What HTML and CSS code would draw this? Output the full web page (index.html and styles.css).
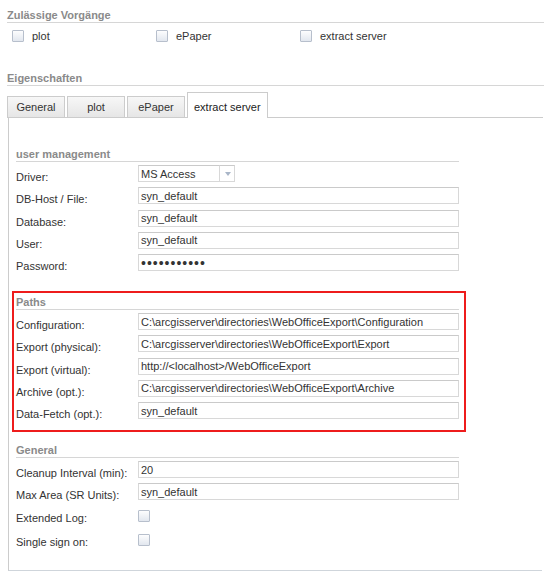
FILE: index.html
```html
<!DOCTYPE html>
<html lang="de">
<head>
    <meta charset="UTF-8">
    <meta name="viewport" content="width=device-width, initial-scale=1.0">
    <title>Extract Server - Eigenschaften</title>
    <link rel="stylesheet" href="styles.css">
</head>
<body>
    <div class="page">
        <div class="group-title ops-title">Zulässige Vorgänge</div>
        <div class="ops">
            <label class="op"><input type="checkbox" class="check"> plot</label>
            <label class="op"><input type="checkbox" class="check"> ePaper</label>
            <label class="op"><input type="checkbox" class="check"> extract server</label>
        </div>

        <div class="group-title props-title">Eigenschaften</div>
        <div class="tabs">
            <div class="tab">General</div>
            <div class="tab">plot</div>
            <div class="tab">ePaper</div>
            <div class="tab active">extract server</div>
        </div>

        <div class="panel">
            <section class="fs">
                <div class="group-title">user management</div>
                <div class="row">
                    <label>Driver:</label>
                    <div class="combo">
                        <input type="text" class="field combo-input" value="MS Access" readonly>
                        <span class="trigger"></span>
                    </div>
                </div>
                <div class="row">
                    <label>DB-Host / File:</label>
                    <input type="text" class="field" value="syn_default">
                </div>
                <div class="row">
                    <label>Database:</label>
                    <input type="text" class="field" value="syn_default">
                </div>
                <div class="row">
                    <label>User:</label>
                    <input type="text" class="field" value="syn_default">
                </div>
                <div class="row">
                    <label>Password:</label>
                    <input type="password" class="field password" value="syn_default">
                </div>
            </section>

            <section class="fs highlight">
                <div class="group-title">Paths</div>
                <div class="row">
                    <label>Configuration:</label>
                    <input type="text" class="field" value="C:\arcgisserver\directories\WebOfficeExport\Configuration">
                </div>
                <div class="row">
                    <label>Export (physical):</label>
                    <input type="text" class="field" value="C:\arcgisserver\directories\WebOfficeExport\Export">
                </div>
                <div class="row">
                    <label>Export (virtual):</label>
                    <input type="text" class="field" value="http://<localhost>/WebOfficeExport">
                </div>
                <div class="row">
                    <label>Archive (opt.):</label>
                    <input type="text" class="field" value="C:\arcgisserver\directories\WebOfficeExport\Archive">
                </div>
                <div class="row">
                    <label>Data-Fetch (opt.):</label>
                    <input type="text" class="field" value="syn_default">
                </div>
            </section>

            <section class="fs">
                <div class="group-title">General</div>
                <div class="row">
                    <label>Cleanup Interval (min):</label>
                    <input type="text" class="field" value="20">
                </div>
                <div class="row">
                    <label>Max Area (SR Units):</label>
                    <input type="text" class="field" value="syn_default">
                </div>
                <div class="row check-row">
                    <label>Extended Log:</label>
                    <input type="checkbox" class="check">
                </div>
                <div class="row check-row">
                    <label>Single sign on:</label>
                    <input type="checkbox" class="check">
                </div>
            </section>
        </div>
    </div>
</body>
</html>
```

FILE: styles.css
```css
:root {
    --text-color: #333;
    --title-color: #8a8a8a;
    --line-color: #d6d6d6;
    --border-color: #cccccc;
}

body {
    margin: 0;
    font-family: "Liberation Sans", Arial, sans-serif;
    font-size: 11px;
    color: var(--text-color);
    background: #fff;
}

.page {
    width: 537px;
    padding-left: 7px;
}

.group-title {
    height: 14px;
    line-height: 14px;
    font-weight: bold;
    color: var(--title-color);
    border-bottom: 1px solid var(--line-color);
}

.ops-title {
    margin-top: 8px;
}

.props-title {
    margin-top: 29px;
}

/* allowed operations */
.ops {
    display: flex;
    margin-top: 7px;
    padding-left: 5px;
}

.op {
    width: 144px;
    height: 12px;
    display: flex;
    align-items: center;
}

.check {
    appearance: none;
    -webkit-appearance: none;
    box-sizing: border-box;
    width: 12px;
    height: 12px;
    margin: 0 8px 0 0;
    border: 1px solid #b7bfcc;
    border-radius: 1px;
    background: linear-gradient(#fdfdfe, #e2e7ef);
}

/* tab strip */
.tabs {
    display: flex;
    align-items: flex-end;
    gap: 2px;
    width: 536px;
    height: 25px;
    margin-top: 6px;
    border-bottom: 1px solid var(--border-color);
}

.tab {
    box-sizing: border-box;
    min-width: 58px;
    height: 21px;
    padding: 0 6px;
    line-height: 20px;
    text-align: center;
    border: 1px solid var(--border-color);
    border-bottom: none;
    background: linear-gradient(#f7f7f7, #e6e6e6);
}

.tab.active {
    height: 26px;
    padding-top: 4px;
    margin-bottom: -1px;
    background: #fff;
    color: #222;
}

/* panel */
.panel {
    width: 530px;
    margin-left: 1px;
    padding: 25px 0 5px 3px;
    border-left: 1px solid var(--border-color);
    border-bottom: 1px solid #cfd5db;
}

.fs {
    box-sizing: border-box;
    width: 454px;
    padding: 2px 5px 11px 2px;
    border: 2px solid transparent;
    margin-bottom: 7px;
}

.fs:last-child {
    margin-bottom: 0;
}

.fs.highlight {
    border-color: #ee1c1c;
}

.fs .group-title {
    margin-bottom: 3px;
}

.row {
    display: flex;
    height: 17px;
    margin-bottom: 5.25px;
}

.row:last-child {
    margin-bottom: 0;
}

.row label {
    width: 122px;
    padding-top: 4px;
    line-height: 17px;
    white-space: nowrap;
}

.field {
    box-sizing: border-box;
    width: 321px;
    height: 17px;
    margin: 0;
    padding: 0 2px;
    border: 1px solid #d8d8d8;
    border-top-color: #cacaca;
    font: inherit;
    color: var(--text-color);
    background: #fff;
    outline: none;
}

.password {
    font-size: 14px;
    letter-spacing: 1px;
}

.combo {
    display: flex;
    width: 97px;
}

.combo-input {
    width: 81px;
    border-right: none;
}

.trigger {
    box-sizing: border-box;
    width: 16px;
    height: 17px;
    border: 1px solid #d8d8d8;
    border-top-color: #cacaca;
    background: #fff;
    position: relative;
}

.trigger::after {
    content: "";
    position: absolute;
    left: 5px;
    top: 6px;
    border-left: 3px solid transparent;
    border-right: 3px solid transparent;
    border-top: 4px solid #a9b6c8;
}

.check-row {
    height: 22px;
    margin-bottom: 2px;
}

.check-row .check {
    margin-top: 4px;
}
```
